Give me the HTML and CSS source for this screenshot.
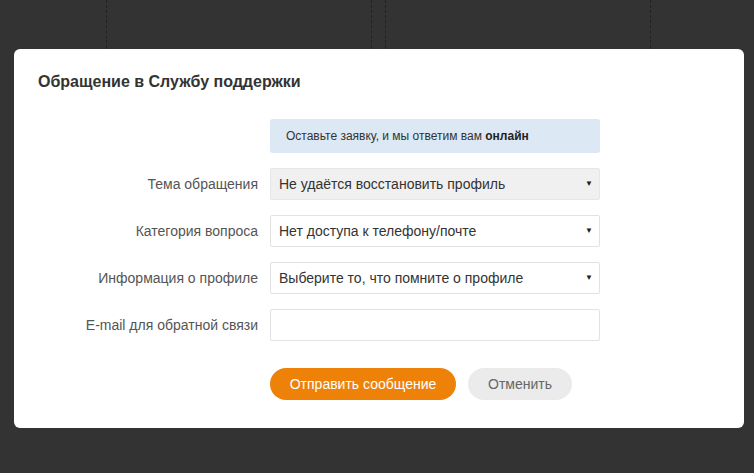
FILE: index.html
```html
<!DOCTYPE html>
<html lang="ru">
<head>
  <meta charset="UTF-8" />
  <title>Обращение в Службу поддержки</title>
  <link rel="stylesheet" href="styles.css">
</head>
<body>
  <div class="page">
    <div class="col"></div>
    <div class="col"></div>
  </div>

  <div class="modal">
    <h2 class="modal-title">Обращение в Службу поддержки</h2>

    <form class="form">
      <div></div>
      <div class="notice">Оставьте заявку, и мы ответим вам <b>онлайн</b></div>

      <label class="label">Тема обращения</label>
      <div class="select disabled">Не удаётся восстановить профиль</div>

      <label class="label">Категория вопроса</label>
      <div class="select">Нет доступа к телефону/почте</div>

      <label class="label">Информация о профиле</label>
      <div class="select">Выберите то, что помните о профиле</div>

      <label class="label">E-mail для обратной связи</label>
      <input class="input" type="text" />

      <div></div>
      <div class="actions">
        <button type="button" class="btn btn-primary">Отправить сообщение</button>
        <button type="button" class="btn btn-cancel">Отменить</button>
      </div>
    </form>
  </div>
</body>
</html>
```

FILE: styles.css
```css
html, body {
  margin: 0; padding: 0;
  background: #333;
  font-family: "Liberation Sans", Arial, sans-serif;
  height: 100%;
  overflow: hidden;
}

.page {
  display: flex;
  gap: 13px;
  padding-left: 106px;
  height: 200px;
}

.col {
  width: 264px;
  border-left: 1px dashed #222;
  border-right: 1px dashed #222;
}

.modal {
  position: absolute; top: 49px; left: 14px;
  width: 730px; height: 379px;
  box-sizing: border-box;
  padding: 24px 24px;
  background: #fff;
  border-radius: 6px;
}

.modal-title {
  margin: 0;
  font-size: 16px;
  line-height: 18px;
  font-weight: bold;
  color: #333;
}

.form {
  display: grid;
  grid-template-columns: 220px 330px;
  column-gap: 12px;
  row-gap: 15px;
  margin-top: 28px;
  align-items: center;
}

.notice {
  height: 34px;
  line-height: 34px;
  padding-left: 16px;
  background: #dce8f4;
  border-radius: 3px;
  font-size: 12px;
  color: #333;
}

.notice b { color: #222; }

.label {
  text-align: right;
  font-size: 14px;
  color: #555;
}

.select, .input {
  box-sizing: border-box;
  height: 32px;
  border: 1px solid #e2e2e2;
  border-radius: 2px;
  background: #fff;
  font: 14px "Liberation Sans", Arial, sans-serif;
  color: #333;
}

.select {
  position: relative;
  line-height: 30px;
  padding-left: 8px;
}

.select::after {
  content: "\25BC";
  position: absolute; right: 6px; top: 0;
  font-size: 8px;
  color: #222;
}

.select.disabled {
  background: #f0f0f0;
  border-color: #e6e6e6;
}

.input {
  width: 100%;
  padding: 0 8px;
  outline: none;
}

.actions {
  display: flex;
  gap: 12px;
  margin-top: 12px;
}

.btn {
  height: 32px;
  border: none;
  border-radius: 16px;
  font: 14px "Liberation Sans", Arial, sans-serif;
  cursor: pointer;
}

.btn-primary {
  width: 186px;
  background: #ee8208;
  color: #fff;
}

.btn-cancel {
  width: 104px;
  background: #ebebeb;
  color: #666;
}
```
